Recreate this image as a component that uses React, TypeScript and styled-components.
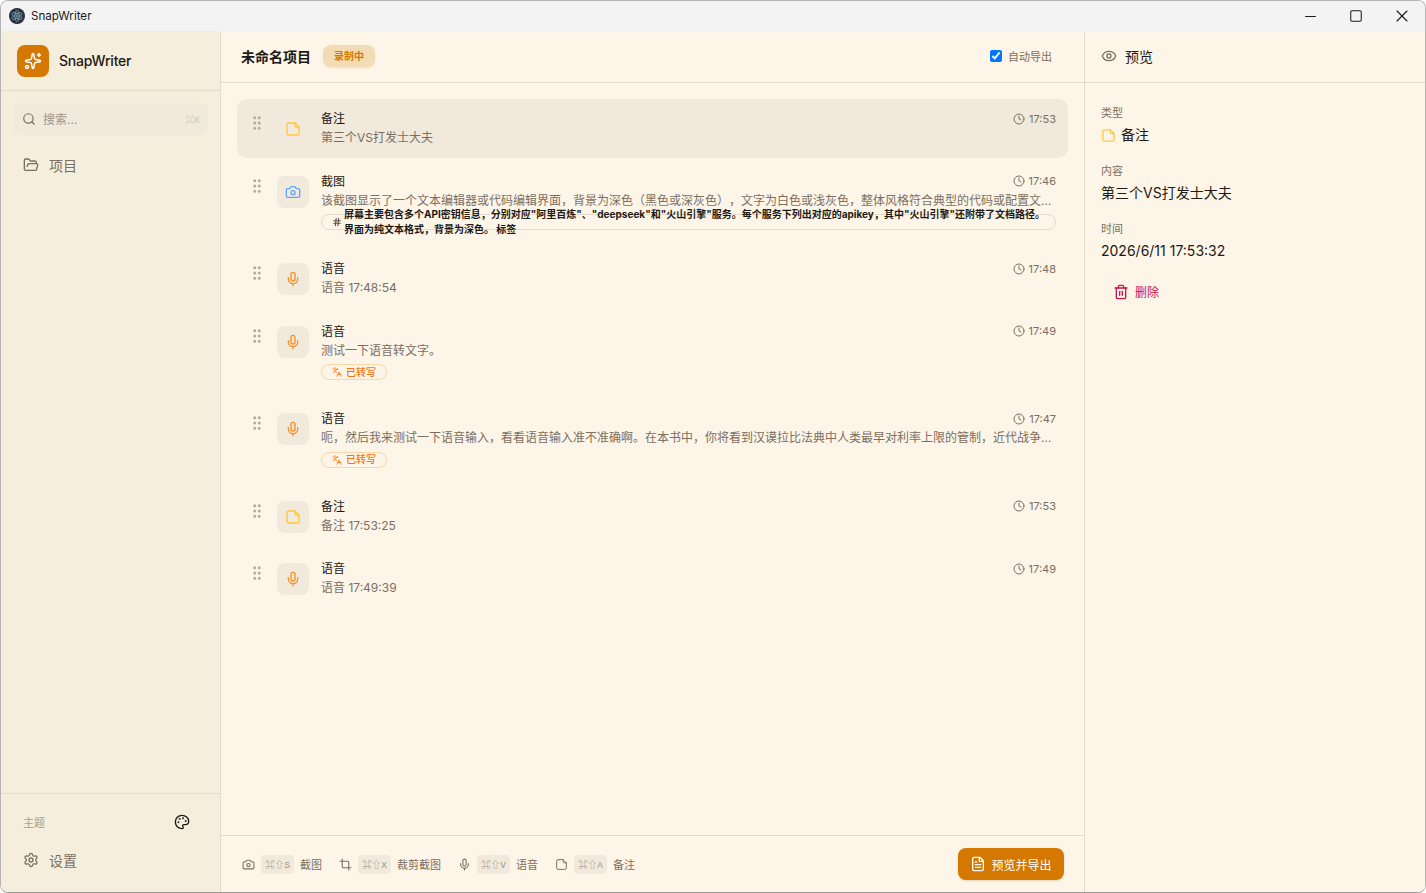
import React from "react";
import styled, { createGlobalStyle } from "styled-components";
import {
  Camera, Clock, Crop, Eye, FileText, FolderOpen, GripVertical, Hash, Languages, Mic,
  Minus, Palette, Search, Settings, Sparkles, Square, Trash2, X,
} from "lucide-react";

const FONT = `Inter, "Noto Sans CJK SC", "Noto Sans", sans-serif`;
const INK = "#1f1a14";
const MUTED = "#7c6f5f";
const LINE = "#e4dbcc";
const ACCENT = "#d47800";

const Global = createGlobalStyle`
  html, body { margin: 0; padding: 0; height: 100%; background: #fff; overflow: hidden; }
  #root { height: 100%; }
  * { box-sizing: border-box; }
  body { font-family: ${FONT}; color: ${INK}; text-spacing-trim: space-all; }
`;

const Win = styled.div`
  height: 893px; width: 1426px; display: flex; flex-direction: column;
  border: 1px solid #b4b4b4; border-bottom-color: #9a9a9a; border-radius: 8px; overflow: hidden;
`;
const TitleBar = styled.div`
  height: 30px; flex: none; display: flex; align-items: center; background: #f3f3f3; padding-left: 8px;
`;
const TitleText = styled.span`
  font-size: 11.6px; margin: -1px 0 0 6px; color: #1a1a1a; flex: 1;
`;
const WinBtn = styled.div`
  width: 46px; height: 30px; display: flex; align-items: center; justify-content: center; color: #1a1a1a;
`;
const Body = styled.div`
  flex: 1; min-height: 0; display: flex;
`;
const Side = styled.aside`
  width: 220px; flex: none; display: flex; flex-direction: column; background: #f5eedd; border-right: 1px solid ${LINE};
`;
const Brand = styled.div`
  height: 60px; flex: none; display: flex; align-items: center; gap: 10px; padding: 0 16px; border-bottom: 1px solid ${LINE};
`;
const LogoBox = styled.div`
  width: 32px; height: 32px; border-radius: 8px; background: ${ACCENT}; color: #fff; display: flex; align-items: center; justify-content: center;
`;
const BrandName = styled.span`
  font-size: 14px; font-weight: 500; letter-spacing: -0.2px; color: ${INK};
`;
const SearchBox = styled.div`
  margin: 12px 12px 0; height: 32px; border-radius: 8px; background: #f0e9dc; display: flex; align-items: center; padding: 0 8px 0 9px; gap: 7px; color: ${MUTED};
`;
const SearchText = styled.span`
  font-size: 12px; margin-top: -2px; color: #a09586; flex: 1;
`;
const SearchKey = styled.span`
  font-family: "Liberation Mono", "Noto Sans CJK SC", "DejaVu Sans", monospace; font-size: 9px; color: #cfc6b7;
`;
const NavItem = styled.div`
  display: flex; align-items: center; gap: 10px; padding: 0 22px; height: 20px; font-size: 14px; color: ${MUTED};
`;
const NavTop = styled.div`
  flex: 1; padding-top: 20px;
`;
const SideFoot = styled.div`
  height: 99px; flex: none; border-top: 1px solid ${LINE}; padding-top: 19px;
`;
const ThemeRow = styled.div`
  display: flex; align-items: center; justify-content: space-between; padding: 0 30px 0 22px; height: 18px; margin-bottom: 19px;
`;
const ThemeLabel = styled.span`
  font-size: 11px; color: #a89d8d;
`;
const Main = styled.main`
  flex: 1; min-width: 0; display: flex; flex-direction: column; background: #fcf5e8;
`;
const Header = styled.div`
  height: 52px; flex: none; display: flex; align-items: center; border-bottom: 1px solid ${LINE}; padding: 0 32px 2px 20px;
`;
const ProjectName = styled.span`
  font-size: 14px; font-weight: 600; color: ${INK};
`;
const Badge = styled.span`
  margin-left: 12px; height: 22px; padding: 0 11px; border-radius: 8px; background: #f1dcb6; color: #d97706; font-size: 10px; font-weight: 600;
  display: inline-flex; align-items: center; box-shadow: 0 1px 2px rgba(120, 90, 30, .12);
`;
const AutoLabel = styled.label`
  margin-left: auto; display: flex; align-items: center; gap: 6px; font-size: 11px; color: ${MUTED};
`;
const Check = styled.input`
  width: 12px; height: 12px; margin: 0; accent-color: #0075ff;
`;
const List = styled.div`
  flex: 1; min-height: 0; padding: 16px 16px 0; display: flex; flex-direction: column; gap: 4px;
`;
const Row = styled.div<{ $active?: boolean }>`
  display: flex; padding: 12px 12px 12px 16px; border-radius: 10px; background: ${(p) => (p.$active ? "#f0e9dc" : "transparent")};
`;
const Grip = styled.div`
  width: 8px; flex: none; height: 18px; margin-top: 3px; color: #b5ab9c; display: flex; justify-content: center;
`;
const IconBox = styled.div<{ $color: string; $plain?: boolean }>`
  width: 32px; height: 32px; margin: 2px 12px 0 16px; flex: none; border-radius: 8px; background: ${(p) => (p.$plain ? "transparent" : "#f0e9dc")};
  color: ${(p) => p.$color}; display: flex; align-items: center; justify-content: center;
`;
const RowBody = styled.div`
  flex: 1; min-width: 0;
`;
const RowTop = styled.div`
  display: flex; justify-content: space-between; align-items: center; height: 15px; margin-top: -1px;
`;
const RowTitle = styled.span`
  font-size: 12px; font-weight: 400; color: ${INK};
`;
const Time = styled.span`
  display: flex; align-items: center; gap: 4px; font-size: 11px; margin-top: 2px; color: ${MUTED};
`;
const Desc = styled.div`
  margin-top: 5px; font-size: 12px; line-height: 15.5px; color: ${MUTED}; white-space: nowrap; overflow: hidden; text-overflow: ellipsis;
`;
const Pill = styled.div<{ $tone: "neutral" | "orange" }>`
  margin: 6px 0 3px; height: 16px; border-radius: 8px; border: 1px solid ${(p) => (p.$tone === "orange" ? "#fbd7a5" : LINE)};
  display: flex; width: ${(p) => (p.$tone === "orange" ? "fit-content" : "auto")}; align-items: center; gap: 4px;
  padding: 0 10px; color: ${(p) => (p.$tone === "orange" ? "#f97316" : "#5a5045")};
  font-size: 10px; font-weight: 500;
  svg { flex: none; }
`;
const PillLabel = styled.span`
  line-height: 14px; margin-top: -1px;
`;
const Overflowing = styled.span`
  margin-left: -2px; width: 705px; flex: none; font-weight: 700; font-size: 10px; line-height: 15px; color: ${INK};
`;
const Footer = styled.div`
  height: 57px; flex: none; border-top: 1px solid ${LINE}; display: flex; align-items: center; padding: 0 20px 0 21px;
`;
const Shortcut = styled.div`
  display: flex; align-items: center; gap: 6px; margin-right: 17px; font-size: 11px; color: ${MUTED};
`;
const Kbd = styled.span`
  font-family: "Liberation Mono", "Noto Sans CJK SC", "DejaVu Sans", monospace; font-size: 9.5px; background: #f0e9dc; border-radius: 4px; width: 33px; height: 19px;
  display: inline-flex; align-items: center; justify-content: center; color: #a0968a;
`;
const ExportBtn = styled.button`
  margin-left: auto; width: 106px; height: 32px; border: 0; border-radius: 8px; background: ${ACCENT}; color: #fff; font-family: ${FONT}; font-size: 12px;
  display: flex; align-items: center; justify-content: center; gap: 5px; box-shadow: 0 1px 2px rgba(120, 80, 0, .2); padding: 0;
`;
const Preview = styled.aside`
  width: 341px; flex: none; background: #fcf5e8; border-left: 1px solid ${LINE}; display: flex; flex-direction: column;
`;
const PreviewHead = styled.div`
  height: 52px; flex: none; border-bottom: 1px solid ${LINE}; display: flex; align-items: center; padding: 0 16px 2px; gap: 8px; font-size: 14px; font-weight: 400; color: ${INK};
`;
const PreviewBody = styled.div`
  padding: 22px 16px 0;
`;
const Field = styled.div`
  margin-bottom: 18px;
`;
const FieldLabel = styled.div`
  font-size: 11px; line-height: 16px; color: ${MUTED};
`;
const FieldValue = styled.div`
  margin-top: 4px; font-size: 14px; line-height: 20px; color: ${INK}; display: flex; align-items: center; gap: 5px;
`;
const DeleteBtn = styled.div`
  margin-top: 22px; padding-left: 12px; display: flex; align-items: center; gap: 6px; font-size: 12px; color: #cc1250;
`;

const Electron = () => (
  <svg width="16" height="16" viewBox="0 0 16 16" fill="none">
    <circle cx="8" cy="8" r="8" fill="#2b2f3c" />
    <g stroke="#86aebc" strokeWidth="0.7">
      <ellipse cx="8" cy="8" rx="5.6" ry="2.2" transform="rotate(30 8 8)" />
      <ellipse cx="8" cy="8" rx="5.6" ry="2.2" transform="rotate(90 8 8)" />
      <ellipse cx="8" cy="8" rx="5.6" ry="2.2" transform="rotate(150 8 8)" />
    </g>
    <circle cx="8" cy="8" r="1" fill="#86aebc" />
  </svg>
);

const NoteIcon = ({ size = 16, color = "currentColor", strokeWidth = 2 }: { size?: number; color?: string; strokeWidth?: number }) => (
  <svg width={size} height={size} viewBox="0 0 24 24" fill="none" stroke={color} strokeWidth={strokeWidth} strokeLinecap="round" strokeLinejoin="round">
    <path d="M6 3h9l6 6v9a3 3 0 0 1-3 3H6a3 3 0 0 1-3-3V6a3 3 0 0 1 3-3z" />
    <path d="M15 3v4a2 2 0 0 0 2 2h4" />
  </svg>
);

const YELLOW = "#fdc93a";
const ORANGE = "#fb8f24";
const BLUE = "#60a5fa";

const Item = ({ kind, time, desc, active, children }: { kind: "note" | "mic" | "cam"; time: string; desc: string; active?: boolean; children?: React.ReactNode }) => {
  const meta = {
    note: { t: "备注", c: YELLOW, I: NoteIcon },
    mic: { t: "语音", c: ORANGE, I: Mic },
    cam: { t: "截图", c: BLUE, I: Camera },
  }[kind];
  return (
    <Row $active={active}>
      <Grip><GripVertical size={18} strokeWidth={2} style={{ flex: "none" }} /></Grip>
      <IconBox $color={meta.c} $plain={active}><meta.I size={16} /></IconBox>
      <RowBody>
        <RowTop>
          <RowTitle>{meta.t}</RowTitle>
          <Time><Clock size={12} />{time}</Time>
        </RowTop>
        <Desc>{desc}</Desc>
        {children}
      </RowBody>
    </Row>
  );
};

const Transcribed = () => (
  <Pill $tone="orange"><Languages size={10} /><PillLabel>已转写</PillLabel></Pill>
);

export default function App() {
  return (
    <Win>
      <Global />
      <TitleBar>
        <Electron />
        <TitleText>SnapWriter</TitleText>
        <WinBtn><Minus size={17} strokeWidth={1.5} /></WinBtn>
        <WinBtn><Square size={14} strokeWidth={1.8} /></WinBtn>
        <WinBtn><X size={20} strokeWidth={1.3} /></WinBtn>
      </TitleBar>
      <Body>
        <Side>
          <Brand>
            <LogoBox><Sparkles size={18} /></LogoBox>
            <BrandName>SnapWriter</BrandName>
          </Brand>
          <SearchBox>
            <Search size={14} />
            <SearchText>搜索...</SearchText>
            <SearchKey>⌘K</SearchKey>
          </SearchBox>
          <NavTop>
            <NavItem><FolderOpen size={16} />项目</NavItem>
          </NavTop>
          <SideFoot>
            <ThemeRow>
              <ThemeLabel>主题</ThemeLabel>
              <Palette size={16} color={INK} />
            </ThemeRow>
            <NavItem><Settings size={16} />设置</NavItem>
          </SideFoot>
        </Side>
        <Main>
          <Header>
            <ProjectName>未命名项目</ProjectName>
            <Badge>录制中</Badge>
            <AutoLabel><Check type="checkbox" checked readOnly />自动导出</AutoLabel>
          </Header>
          <List>
            <Item kind="note" time="17:53" desc="第三个VS打发士大夫" active />
            <Item kind="cam" time="17:46" desc="该截图显示了一个文本编辑器或代码编辑界面，背景为深色（黑色或深灰色），文字为白色或浅灰色，整体风格符合典型的代码或配置文件内容，屏幕主要包含多个API密钥信息">
              <Pill $tone="neutral">
                <Hash size={10} strokeWidth={2.6} />
                <Overflowing>屏幕主要包含多个API密钥信息，分别对应"阿里百炼"、"deepseek"和"火山引擎"服务。每个服务下列出对应的apikey，其中"火山引擎"还附带了文档路径。界面为纯文本格式，背景为深色。 标签</Overflowing>
              </Pill>
            </Item>
            <Item kind="mic" time="17:48" desc="语音 17:48:54" />
            <Item kind="mic" time="17:49" desc="测试一下语音转文字。"><Transcribed /></Item>
            <Item kind="mic" time="17:47" desc="呃，然后我来测试一下语音输入，看看语音输入准不准确啊。在本书中，你将看到汉谟拉比法典中人类最早对利率上限的管制，近代战争与国债的兴起，以及现代中央银行的诞生"><Transcribed /></Item>
            <Item kind="note" time="17:53" desc="备注 17:53:25" />
            <Item kind="mic" time="17:49" desc="语音 17:49:39" />
          </List>
          <Footer>
            <Shortcut><Camera size={13} /><Kbd>⌘⇧S</Kbd>截图</Shortcut>
            <Shortcut><Crop size={13} /><Kbd>⌘⇧X</Kbd>裁剪截图</Shortcut>
            <Shortcut><Mic size={13} /><Kbd>⌘⇧V</Kbd>语音</Shortcut>
            <Shortcut><NoteIcon size={13} strokeWidth={1.8} /><Kbd>⌘⇧A</Kbd>备注</Shortcut>
            <ExportBtn><FileText size={16} />预览并导出</ExportBtn>
          </Footer>
        </Main>
        <Preview>
          <PreviewHead><Eye size={16} color={MUTED} />预览</PreviewHead>
          <PreviewBody>
            <Field>
              <FieldLabel>类型</FieldLabel>
              <FieldValue><NoteIcon size={15} color={YELLOW} />备注</FieldValue>
            </Field>
            <Field>
              <FieldLabel>内容</FieldLabel>
              <FieldValue>第三个VS打发士大夫</FieldValue>
            </Field>
            <Field>
              <FieldLabel>时间</FieldLabel>
              <FieldValue>2026/6/11 17:53:32</FieldValue>
            </Field>
            <DeleteBtn><Trash2 size={16} />删除</DeleteBtn>
          </PreviewBody>
        </Preview>
      </Body>
    </Win>
  );
}
